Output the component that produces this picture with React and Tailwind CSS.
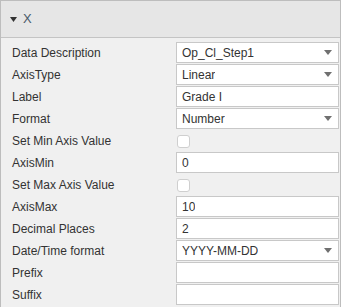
import { useState } from 'react';

const rows = [
  { label: 'Data Description', type: 'select', value: 'Op_Cl_Step1' },
  { label: 'AxisType', type: 'select', value: 'Linear' },
  { label: 'Label', type: 'text', value: 'Grade I' },
  { label: 'Format', type: 'select', value: 'Number' },
  { label: 'Set Min Axis Value', type: 'check' },
  { label: 'AxisMin', type: 'text', value: '0' },
  { label: 'Set Max Axis Value', type: 'check' },
  { label: 'AxisMax', type: 'text', value: '10' },
  { label: 'Decimal Places', type: 'text', value: '2' },
  { label: 'Date/Time format', type: 'select', value: 'YYYY-MM-DD' },
  { label: 'Prefix', type: 'text', value: '' },
  { label: 'Suffix', type: 'text', value: '' },
];

function Caret() {
  return (
    <svg width="8" height="5" viewBox="0 0 8 5" className="shrink-0">
      <path d="M0 0 L8 0 L4 5 Z" fill="#707070" />
    </svg>
  );
}

function Field({ row }) {
  if (row.type === 'check') {
    return (
      <div className="flex h-[22px] items-center">
        <span className="ml-px block h-[13px] w-[13px] rounded-[3px] border border-[#cfcfcf] bg-white" />
      </div>
    );
  }

  return (
    <div className="flex h-[21px] items-center justify-between border border-[#c8c8c8] bg-white pl-[5px] pr-[6px]">
      <span className="truncate">{row.value}</span>
      {row.type === 'select' && <Caret />}
    </div>
  );
}

export default function App() {
  const [open] = useState(true);

  return (
    <div className="h-[307px] w-[342px] bg-white font-['Liberation_Sans',Arial,sans-serif] text-[12px] text-[#333]">
      <div className="h-full w-[341px] overflow-hidden border-x border-t border-[#bdbdbd] bg-[#f0f0f0]">
        <div className="flex h-[37px] items-center gap-[6px] border-b border-[#c4c4c4] bg-[#e6e6e6] pl-[9px] text-[13px] text-[#4a5a6a]">
          <svg width="7" height="5" viewBox="0 0 7 5">
            <path d="M0 0 L7 0 L3.5 5 Z" fill="#333" />
          </svg>
          <span>X</span>
        </div>

        {open && (
          <div className="pt-[4px] pr-[1px]">
            {rows.map((row) => (
              <div key={row.label} className="grid h-[22px] grid-cols-[175px_1fr] items-start">
                <div className="flex h-[22px] items-center pl-[11px]">{row.label}</div>
                <Field row={row} />
              </div>
            ))}
          </div>
        )}
      </div>
    </div>
  );
}
